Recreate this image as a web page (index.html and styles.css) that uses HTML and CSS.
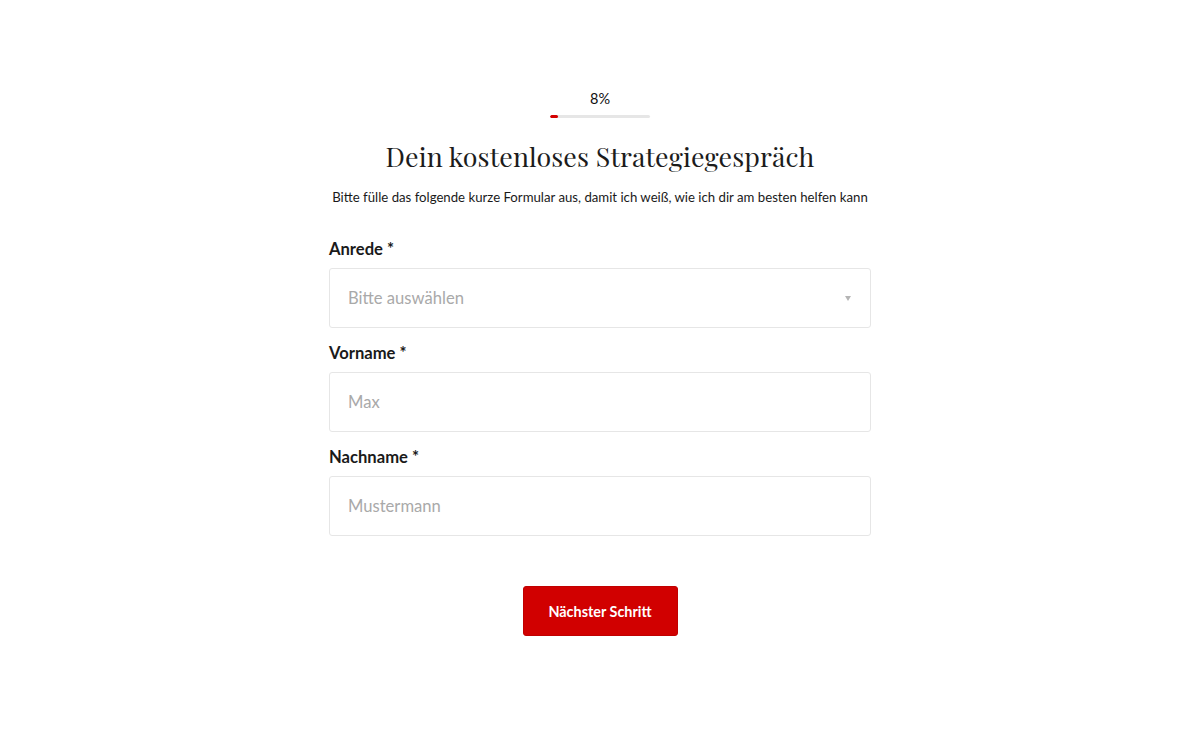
FILE: index.html
```html
<!DOCTYPE html>
<html lang="de">
<head>
<meta charset="utf-8">
<title>Strategiegespräch</title>
<link rel="stylesheet" href="styles.css">
</head>
<body>
<main class="page">
  <div class="progress">
    <div class="progress-label">8%</div>
    <div class="progress-track"><div class="progress-fill" style="width:8%"></div></div>
  </div>
  <h1 class="title">Dein kostenloses Strategiegespräch</h1>
  <p class="subtitle">Bitte fülle das folgende kurze Formular aus, damit ich weiß, wie ich dir am besten helfen kann</p>
  <form class="form">
    <div class="field">
      <label class="label">Anrede *</label>
      <div class="select">
        <span class="placeholder">Bitte auswählen</span>
        <span class="arrow"></span>
      </div>
    </div>
    <div class="field">
      <label class="label">Vorname *</label>
      <input class="input" type="text" placeholder="Max">
    </div>
    <div class="field">
      <label class="label">Nachname *</label>
      <input class="input" type="text" placeholder="Mustermann">
    </div>
    <div class="actions">
      <button type="button" class="button">Nächster Schritt</button>
    </div>
  </form>
</main>
</body>
</html>
```
FILE: styles.css
```css
html, body {
  margin: 0;
  padding: 0;
  background: #ffffff;
}
body {
  font-family: Lato, "Open Sans", sans-serif;
  color: #1a1a1a;
}
.page {
  width: 542px;
  margin: 0 auto;
  padding-top: 90px;
  display: flex;
  flex-direction: column;
  align-items: center;
}
.progress {
  display: flex;
  flex-direction: column;
  align-items: center;
}
.progress-label {
  font-size: 14.5px;
  line-height: 18px;
  color: #111;
}
.progress-track {
  margin-top: 7px;
  width: 100px;
  height: 3px;
  background: #e6e6e6;
  border-radius: 2px;
  overflow: hidden;
}
.progress-fill {
  height: 100%;
  background: #d40000;
  border-radius: 2px;
}
.title {
  margin: 20px 0 0;
  font-family: "Playfair Display", "Liberation Serif", "DejaVu Serif", serif;
  font-weight: 400;
  font-size: 26.8px;
  line-height: 36px;
  color: #1c1c1c;
  letter-spacing: 0.1px;
}
.subtitle {
  margin: 13px 0 0;
  font-size: 13.2px;
  line-height: 20px;
  color: #1a1a1a;
  white-space: nowrap;
}
.form {
  width: 100%;
  margin-top: 31px;
  display: flex;
  flex-direction: column;
  gap: 14px;
}
.field {
  display: flex;
  flex-direction: column;
  gap: 8px;
}
.label {
  font-weight: 700;
  font-size: 16.6px;
  line-height: 22px;
  color: #1a1a1a;
}
.select, .input {
  box-sizing: border-box;
  width: 100%;
  height: 60px;
  border: 1px solid #e6e6e6;
  border-radius: 3px;
  background: #fff;
  font-family: Lato, "Open Sans", sans-serif;
  font-size: 16.6px;
  padding: 0 18px;
  color: #333;
  outline: none;
}
.select {
  display: flex;
  align-items: center;
  justify-content: space-between;
}
.placeholder {
  color: #a9a9a9;
}
.input::placeholder {
  color: #a9a9a9;
  opacity: 1;
}
.arrow {
  width: 0;
  height: 0;
  border-left: 3px solid transparent;
  border-right: 3px solid transparent;
  border-top: 5px solid #b5b5b5;
  margin-right: 1px;
}
.actions {
  display: flex;
  justify-content: center;
  margin-top: 36px;
}
.button {
  width: 155px;
  height: 50px;
  background: #d10000;
  color: #fff;
  border: 1px solid #c00000;
  border-radius: 3px;
  font-family: Lato, "Open Sans", sans-serif;
  font-weight: 700;
  font-size: 14.4px;
  cursor: pointer;
}
```
